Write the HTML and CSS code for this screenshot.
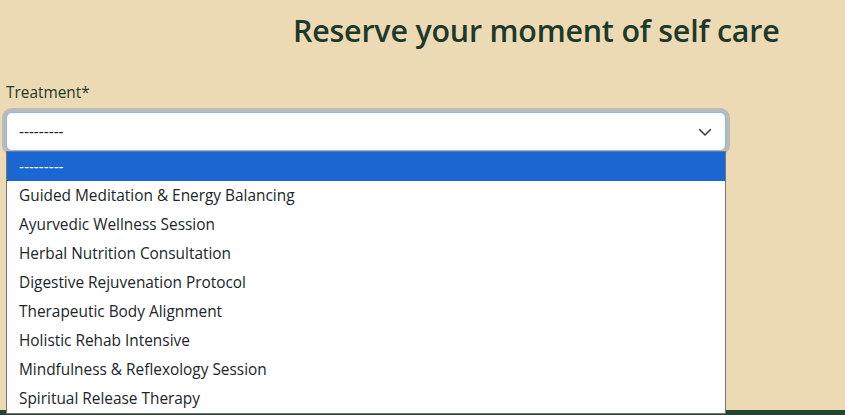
FILE: index.html
```html
<!DOCTYPE html>
<html lang="en">
<head>
<meta charset="utf-8">
<title>Reserve your moment of self care</title>
<link rel="stylesheet" href="styles.css">
</head>
<body>
<main class="page">
  <h1 class="title">Reserve your moment of self care</h1>
  <form class="form">
    <label class="label" for="treatment">Treatment*</label>
    <div class="select-wrap">
      <div class="select" id="treatment">
        <span class="select-value">---------</span>
        <svg class="chevron" width="16" height="12" viewBox="0 0 16 12" aria-hidden="true">
          <path d="M2.5 3.5 L8 9 L13.5 3.5" fill="none" stroke="#343a40" stroke-width="1.5" stroke-linecap="round" stroke-linejoin="round"/>
        </svg>
      </div>
      <ul class="options">
        <li class="option selected">---------</li>
        <li class="option">Guided Meditation &amp; Energy Balancing</li>
        <li class="option">Ayurvedic Wellness Session</li>
        <li class="option">Herbal Nutrition Consultation</li>
        <li class="option">Digestive Rejuvenation Protocol</li>
        <li class="option">Therapeutic Body Alignment</li>
        <li class="option">Holistic Rehab Intensive</li>
        <li class="option">Mindfulness &amp; Reflexology Session</li>
        <li class="option">Spiritual Release Therapy</li>
      </ul>
    </div>
  </form>
</main>
<footer class="footer"></footer>
</body>
</html>
```

FILE: styles.css
```css
* { box-sizing: border-box; }

html, body {
  margin: 0;
  padding: 0;
}

body {
  background: #ecdab4;
  font-family: "Open Sans", "Noto Sans", sans-serif;
  font-size: 15.4px;
  color: #212529;
}

.page {
  height: 410px;
  padding: 0 6px;
}

.title {
  margin: 0;
  padding: 11px 0 0 287px;
  font-size: 30.4px;
  font-weight: 600;
  line-height: 40px;
  color: #1c392a;
  letter-spacing: -0.2px;
}

.form {
  margin-top: 31px;
  width: 720px;
}

.label {
  display: block;
  font-size: 15.4px;
  line-height: 22px;
  color: #1e3a2c;
  margin-bottom: 8px;
}

.select-wrap {
  position: relative;
}

.select {
  height: 39px;
  display: flex;
  align-items: center;
  justify-content: space-between;
  padding: 0 12px 0 12px;
  background: #fff;
  border: 1px solid #86b7fe;
  border-radius: 6px;
  box-shadow: 0 0 0 4px rgba(120, 150, 190, 0.45);
}

.select-value {
  color: #212529;
}

.chevron {
  display: block;
}

.options {
  position: absolute;
  left: 0;
  right: 0;
  top: 39px;
  margin: 0;
  padding: 0;
  list-style: none;
  background: #fff;
  border: 1px solid #767676;
  z-index: 5;
}

.option {
  height: 29px;
  line-height: 29px;
  padding-left: 12px;
  color: #212529;
  white-space: nowrap;
}

.option.selected {
  background: #1a67d2;
  color: #fff;
}

.footer {
  height: 5px;
  background: #244532;
}
```
